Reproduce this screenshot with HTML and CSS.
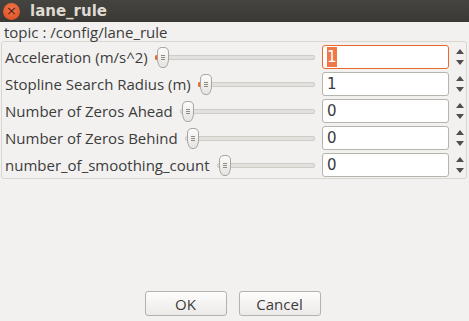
FILE: index.html
```html
<!DOCTYPE html>
<html lang="en">
<head>
    <meta charset="UTF-8">
    <title>lane_rule</title>
    <link rel="stylesheet" href="styles.css">
</head>
<body>
    <header class="titlebar">
        <span class="close-btn">&times;</span>
        <span class="title">lane_rule</span>
    </header>

    <div class="group">
        <div class="group-title">topic : /config/lane_rule</div>
        <div class="group-frame">
            <div class="row">
                <label>Acceleration (m/s^2)</label>
                <div class="slider has-value"><span class="handle"></span></div>
                <div class="spin focused"><span class="field"><span class="selected">1</span></span><span class="arrows"><i class="up"></i><i class="down"></i></span></div>
            </div>
            <div class="row">
                <label>Stopline Search Radius (m)</label>
                <div class="slider has-value"><span class="handle"></span></div>
                <div class="spin"><span class="field">1</span><span class="arrows"><i class="up"></i><i class="down"></i></span></div>
            </div>
            <div class="row">
                <label>Number of Zeros Ahead</label>
                <div class="slider"><span class="handle"></span></div>
                <div class="spin"><span class="field">0</span><span class="arrows"><i class="up"></i><i class="down"></i></span></div>
            </div>
            <div class="row">
                <label>Number of Zeros Behind</label>
                <div class="slider"><span class="handle"></span></div>
                <div class="spin"><span class="field">0</span><span class="arrows"><i class="up"></i><i class="down"></i></span></div>
            </div>
            <div class="row">
                <label>number_of_smoothing_count</label>
                <div class="slider"><span class="handle"></span></div>
                <div class="spin"><span class="field">0</span><span class="arrows"><i class="up"></i><i class="down"></i></span></div>
            </div>
        </div>
    </div>

    <div class="buttons">
        <button>OK</button>
        <button>Cancel</button>
    </div>
</body>
</html>
```

FILE: styles.css
```css
body, html {
    margin: 0;
    padding: 0;
    height: 100%;
}

body {
    display: flex;
    flex-direction: column;
    background-color: #f2f1f0;
    font-family: "Open Sans", sans-serif;
    font-size: 15px;
    color: #3c3c3c;
}

.titlebar {
    height: 22px;
    display: flex;
    align-items: center;
    background: linear-gradient(#45443f, #3a3935);
    color: #dfdbd2;
}

.close-btn {
    width: 17px;
    height: 17px;
    margin-left: 3px;
    border-radius: 50%;
    background: radial-gradient(circle at 50% 35%, #f1764a, #dc4a1c);
    color: #4a2316;
    font-family: "DejaVu Sans", sans-serif;
    font-size: 13px;
    line-height: 16px;
    text-align: center;
}

.title {
    margin-left: 10px;
    font-family: "DejaVu Sans", sans-serif;
    font-weight: bold;
    font-size: 15px;
}

.group {
    padding: 2px 2px 0 1px;
}

.group-title {
    padding-left: 3px;
    line-height: 17px;
}

.group-frame {
    border: 1px solid #d9d6d2;
    border-radius: 3px;
    padding: 3px 0 1px 3px;
    display: flex;
    flex-direction: column;
    gap: 3px;
}

.row {
    display: flex;
    align-items: center;
    height: 24px;
}

.row label {
    white-space: nowrap;
    margin-right: 7px;
}

.slider {
    flex: 1;
    height: 3px;
    position: relative;
    margin-right: 7px;
    border-radius: 2px;
    background: #e3e1de;
    border: 1px solid #cfccc8;
}

.slider.has-value::before {
    content: "";
    position: absolute;
    left: -1px;
    top: -1px;
    width: 3px;
    height: 5px;
    background: #e9692c;
    border-radius: 2px;
}

.handle {
    position: absolute;
    left: 1px;
    top: -9px;
    width: 10px;
    height: 19px;
    border: 1px solid #a9a59f;
    border-radius: 5px 5px 5px 5px / 5px 5px 9px 9px;
    background-image: linear-gradient(#8e8a84, #8e8a84), linear-gradient(#8e8a84, #8e8a84), linear-gradient(#8e8a84, #8e8a84), linear-gradient(#fbfbfa, #e6e4e1);
    background-size: 4px 1px, 4px 1px, 4px 1px, 100% 100%;
    background-position: 3px 7px, 3px 9px, 3px 11px, 0 0;
    background-repeat: no-repeat;
}

.spin {
    display: flex;
    align-items: center;
    height: 24px;
}

.field {
    width: 121px;
    height: 22px;
    padding-left: 4px;
    border: 1px solid #b7b3ad;
    border-radius: 3px;
    background: #fff;
    color: #3c3c3c;
    font-family: "DejaVu Sans", sans-serif;
    font-size: 15px;
    line-height: 22px;
}

.spin.focused .field {
    border-color: #e9692c;
}

.selected {
    background: #f07746;
    color: #fff;
    padding: 1px 0;
}

.arrows {
    width: 13px;
    padding-left: 4px;
    display: flex;
    flex-direction: column;
    align-items: center;
    gap: 6px;
}

.arrows i {
    width: 0;
    height: 0;
    border-left: 4px solid transparent;
    border-right: 4px solid transparent;
}

.arrows .up {
    border-bottom: 5px solid #4f4f4f;
}

.arrows .down {
    border-top: 5px solid #4f4f4f;
}

.buttons {
    margin-top: auto;
    display: flex;
    justify-content: center;
    gap: 12px;
    padding: 0 4px 5px 0;
}

button {
    width: 82px;
    height: 25px;
    border: 1px solid #b5b1ac;
    border-radius: 3px;
    background: linear-gradient(#fdfdfd, #eceae7);
    font-family: "Open Sans", sans-serif;
    font-size: 15px;
    color: #3c3c3c;
}
```
